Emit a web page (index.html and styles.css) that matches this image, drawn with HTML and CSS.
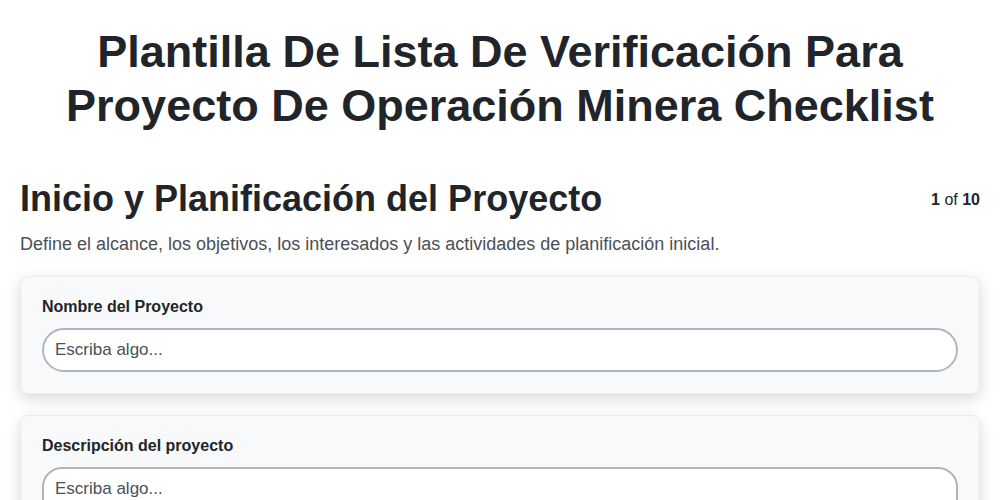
FILE: index.html
```html
<!DOCTYPE html>
<html lang="es">
<head>
<meta charset="utf-8">
<link rel="stylesheet" href="styles.css">
</head>
<body>
<div class="page">
  <h1 class="title">Plantilla De Lista De Verificación Para Proyecto De Operación Minera Checklist</h1>
  <div class="section-head">
    <h2 class="section-title">Inicio y Planificación del Proyecto</h2>
    <div class="pager"><b>1</b> of <b>10</b></div>
  </div>
  <p class="section-desc">Define el alcance, los objetivos, los interesados y las actividades de planificación inicial.</p>
  <div class="card">
    <label class="label">Nombre del Proyecto</label>
    <input class="input" type="text" placeholder="Escriba algo...">
  </div>
  <div class="card">
    <label class="label">Descripción del proyecto</label>
    <textarea class="textarea" placeholder="Escriba algo..."></textarea>
  </div>
</div>
</body>
</html>
```
FILE: styles.css
```css
* { box-sizing: border-box; }
html, body { margin: 0; padding: 0; background: #fff; }
body { font-family: "Liberation Sans", Arial, sans-serif; color: #212529; }
.page { padding: 0 20px; }
.title {
  margin: 0;
  padding: 25px 30px 0;
  text-align: center;
  font-size: 45px;
  line-height: 54px;
  font-weight: 700;
  color: #212529;
}
.section-head {
  display: flex;
  justify-content: space-between;
  align-items: flex-start;
  margin-top: 44px;
}
.section-title {
  margin: 0;
  font-size: 36px;
  line-height: 44px;
  font-weight: 700;
  color: #212529;
}
.pager {
  font-size: 16px;
  line-height: 20px;
  margin-top: 13px;
  color: #212529;
}
.section-desc {
  margin: 13px 0 22px;
  font-size: 18px;
  line-height: 20px;
  color: #495057;
}
.card {
  background: #f8f9fa;
  border: 1px solid #e9ecef;
  border-radius: 8px;
  box-shadow: 0 5px 15px rgba(0,0,0,0.15);
  padding: 20px 21px 21px;
  margin-bottom: 21px;
}
.label {
  display: block;
  font-size: 16px;
  font-weight: 700;
  line-height: 20px;
  margin-bottom: 11px;
  color: #212529;
}
.input, .textarea {
  display: block;
  width: 100%;
  height: 44px;
  border: 2px solid #adb5bd;
  border-radius: 22px;
  background: #fff;
  padding: 0 11px;
  font-family: "Liberation Sans", Arial, sans-serif;
  font-size: 17px;
  color: #212529;
  outline: none;
}
.textarea {
  height: 80px;
  border-radius: 20px;
  padding-top: 10px;
  resize: none;
}
.input::placeholder, .textarea::placeholder { color: #495057; opacity: 1; }
```
